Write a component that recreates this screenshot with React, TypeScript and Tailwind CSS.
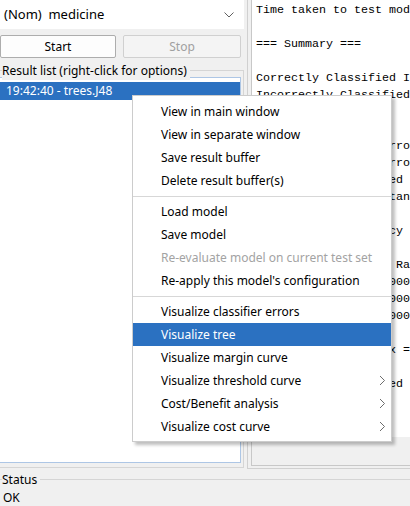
import React from "react";

const ui = "font-['Noto_Sans',sans-serif]";

const outputLines = [
  "Time taken to test model on training data: 0 seconds",
  "",
  "=== Summary ===",
  "",
  "Correctly Classified Instances          20              100      %",
  "Incorrectly Classified Instances         0                0      %",
  "Kappa statistic                          1     ",
  "Mean absolute error                      0     ",
  "Root mean squared error                  0     ",
  "Relative absolute error                  0      %",
  "Root relative squared error              0      %",
  "Total Number of Instances               20     ",
  "",
  "=== Detailed Accuracy By Class ===",
  "",
  "                 TP Rate  FP Rate  Precision  Recall   F-Measure  MCC",
  "                 1.000    0.000    1.000      1.000    1.000      1.000",
  "                 1.000    0.000    1.000      1.000    1.000      1.000",
  "Weighted Avg.    1.000    0.000    1.000      1.000    1.000      1.000",
  "",
  "=== Confusion Matrix ===",
  "",
  " a b   <-- classified as",
];

type Item = { label: string; disabled?: boolean; active?: boolean; sub?: boolean } | "sep";

const menuItems: Item[] = [
  { label: "View in main window" },
  { label: "View in separate window" },
  { label: "Save result buffer" },
  { label: "Delete result buffer(s)" },
  "sep",
  { label: "Load model" },
  { label: "Save model" },
  { label: "Re-evaluate model on current test set", disabled: true },
  { label: "Re-apply this model's configuration" },
  "sep",
  { label: "Visualize classifier errors" },
  { label: "Visualize tree", active: true },
  { label: "Visualize margin curve" },
  { label: "Visualize threshold curve", sub: true },
  { label: "Cost/Benefit analysis", sub: true },
  { label: "Visualize cost curve", sub: true },
];

const Chevron = ({ white }: { white?: boolean }) => (
  <svg width="7" height="11" viewBox="0 0 7 11" fill="none">
    <path d="M1 1l4.5 4.5L1 10" stroke={white ? "#fff" : "#6d6d6d"} strokeWidth="1" />
  </svg>
);

const ContextMenu = () => (
  <div className="absolute left-[132px] top-[95px] w-[260px] bg-white border border-[#cccccc] pt-[4px] pb-[3px] shadow-[3px_3px_3px_rgba(0,0,0,0.25)]">
    {menuItems.map((it, i) =>
      it === "sep" ? (
        <div key={i} className="h-[8px] flex items-center">
          <div className="h-px w-full bg-[#d7d7d7]" />
        </div>
      ) : (
        <div
          key={i}
          className={`h-[23px] flex items-center justify-between pl-[28px] pr-[5px] text-[12px] ${
            it.active ? "bg-[#2b71c1] text-white" : it.disabled ? "text-[#a3a3a3]" : "text-black"
          }`}
        >
          <span>{it.label}</span>
          {it.sub && <Chevron white={it.active} />}
        </div>
      )
    )}
  </div>
);

export default function App() {
  return (
    <div className={`relative w-[410px] h-[506px] overflow-hidden bg-[#f0f0f0] text-black ${ui}`}>
      <div className="flex h-[469px]">
        {/* left column */}
        <div className="w-[245px] flex flex-col">
          <div className="h-[29px] w-[244px] bg-white flex items-center justify-between pl-[4px] pr-[10px] text-[13px]">
            <span>(Nom)&nbsp; medicine</span>
            <svg width="10" height="6" viewBox="0 0 10 6" fill="none">
              <path d="M0.5 0.5l4.5 4.5 4.5-4.5" stroke="#606060" strokeWidth="1" />
            </svg>
          </div>
          <div className="mt-[6px] flex gap-[7px] text-[12px]">
            <button className="w-[116px] h-[23px] bg-[#fdfdfd] border border-[#adadad] rounded-[2px] flex items-center justify-center">
              Start
            </button>
            <button className="w-[118px] h-[23px] bg-[#f4f4f4] border border-[#d0d0d0] rounded-[2px] flex items-center justify-center text-[#a0a0a0]">
              Stop
            </button>
          </div>
          <div className="relative mt-[12px] h-[398px] border-t border-r border-b border-[#d5d5d5] pt-[6px]">
            <div className="absolute -top-[9px] left-[2px] bg-[#f0f0f0] pr-[3px] text-[12px] leading-[18px]">
              Result list (right-click for options)
            </div>
            <div className="w-[241px] h-[386px] bg-white border-t border-r border-b border-[#adc6e5] pt-[4px]">
              <div className="h-[18px] bg-[#2b71c1] text-white text-[12px] flex items-center pl-[6px]">
                19:42:40 - trees.J48
              </div>
            </div>
          </div>
        </div>

        {/* right column */}
        <div className="flex-1 ml-[3px] border-l border-b border-[#d0d0d0] pl-[3px] pb-[2px]">
          <div className="h-[466px] border-l border-b border-[#c8c8c8] flex flex-col">
            <div className="h-[437px] bg-white overflow-hidden pl-[4px] pt-[2px] font-['Liberation_Mono',monospace] text-[11.67px] leading-[17px] whitespace-pre">
              {outputLines.map((l, i) => (
                <div key={i} className="h-[17px]">
                  {l}
                </div>
              ))}
            </div>
            <div className="flex-1 bg-[#f0f0f0]" />
          </div>
        </div>
      </div>

      {/* status */}
      <div className="relative mt-[10px] border-t border-[#d5d5d5] h-[27px]">
        <div className="absolute -top-[9px] left-[2px] bg-[#f0f0f0] pr-[3px] text-[12px] leading-[18px]">
          Status
        </div>
        <div className="pt-[9px] pl-[3px] text-[12px] leading-[18px]">OK</div>
      </div>

      <ContextMenu />
    </div>
  );
}
